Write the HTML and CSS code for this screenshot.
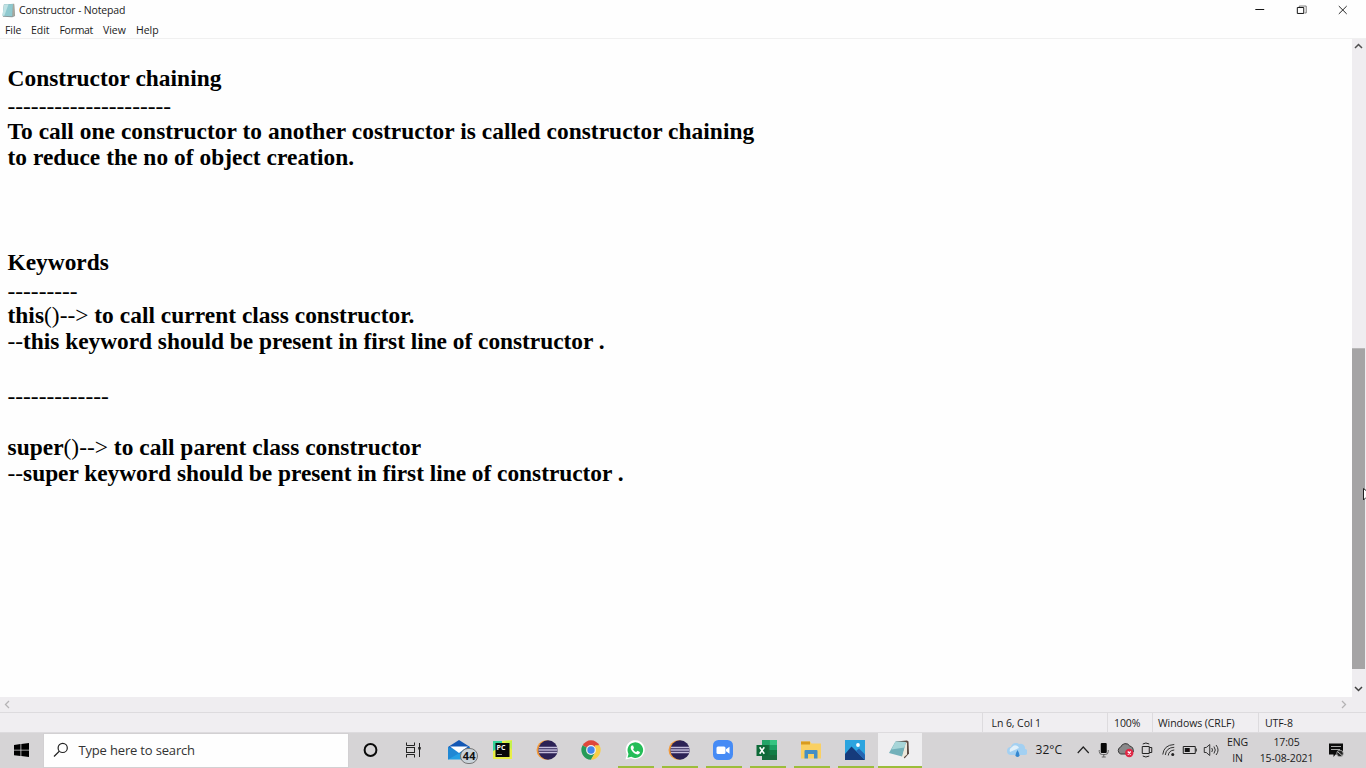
FILE: index.html
```html
<!DOCTYPE html>
<html lang="en">
<head>
<meta charset="utf-8">
<title>Constructor - Notepad</title>
<link rel="stylesheet" href="styles.css">
</head>
<body>
<div class="screen">
  <header class="titlebar">
    <svg class="app-icon" viewBox="0 0 16 16"><path d="M3 1.500 14 .8l1 13-3 1.500-10-.6z" fill="#8a989a"/><path d="M3.300 1.500 12.800 1 12.200 14 1.500 13.500z" fill="#8fc9cf"/><path d="M3.300 1.500 8 1.300 3.500 13.600 1.500 13.500z" fill="#bfe2e4"/><path d="M12.800 1 14 1.200 14.500 13.600 12.200 14.500z" fill="#a9a79c"/></svg>
    <span class="title">Constructor - Notepad</span>
    <div class="controls">
      <svg viewBox="0 0 42 20"><path d="M15.500 9.500h9" stroke="#111" fill="none"/></svg>
      <svg viewBox="0 0 42 20"><path d="M17.500 7.500v-1.500h7v7h-1.500" stroke="#777" fill="none"/><path d="M15.500 7.500h6.500v6h-6.500z" stroke="#111" fill="none"/></svg>
      <svg viewBox="0 0 42 20"><path d="m16 6 8 8m0-8-8 8" stroke="#222" fill="none"/></svg>
    </div>
  </header>
  <nav class="menu"><span class="m1">File</span><span class="m2">Edit</span><span class="m3">Format</span><span class="m4">View</span><span class="m5">Help</span></nav>
  <main class="editor">
    <div class="text">
      <p class="l1">Constructor chaining</p>
      <p class="rule">---------------------</p>
      <p class="l2">To call one constructor to another costructor is called constructor chaining</p>
      <p class="l3">to reduce the no of object creation.</p>
      <p></p><p></p><p></p>
      <p>Keywords</p>
      <p class="rule">---------</p>
      <p class="l3">this<span class="thin">()--&gt;</span> to call current class constructor.</p>
      <p class="l6"><span class="thin">--</span>this keyword should be present in first line of constructor .</p>
      <p></p>
      <p class="rule">-------------</p>
      <p></p>
      <p class="l3">super<span class="thin">()--&gt;</span> to call parent class constructor</p>
      <p class="l6"><span class="thin">--</span>super keyword should be present in first line of constructor .</p>
    </div>
    <aside class="vscroll">
      <svg class="arrow" viewBox="0 0 14 14"><path d="m3 9 3.500-3.500L10 9" stroke="#505050" stroke-width="1.500" fill="none"/></svg>
      <div class="thumb"></div>
      <svg class="arrow" viewBox="0 0 14 14"><path d="m3 4 3.500 3.500L10 4" stroke="#404040" stroke-width="1.500" fill="none"/></svg>
    </aside>
  </main>
  <div class="hscroll">
    <svg viewBox="0 0 14 14"><path d="M9 4 5.500 7.500 9 11" stroke="#b5b3b5" stroke-width="1.300" fill="none"/></svg>
    <svg viewBox="0 0 14 14"><path d="m4 4 3.500 3.500L4 11" stroke="#b5b3b5" stroke-width="1.300" fill="none"/></svg>
  </div>
  <footer class="status">
    <div class="cell pos"><span>Ln 6, Col 1</span></div>
    <div class="cell zoom"><span>100%</span></div>
    <div class="cell eol"><span>Windows (CRLF)</span></div>
    <div class="cell enc"><span>UTF-8</span></div>
  </footer>
  <div class="taskbar">
    <div class="start"><svg width="15" height="14" viewBox="0 0 15 14"><path d="M0 2 6.500 1v5.700H0zM7.300.9 15 0v6.700H7.300zM0 7.400h6.500V13L0 12.200zM7.300 7.400H15V14l-7.700-.9z"/></svg></div>
    <div class="search">
      <svg width="16" height="16" viewBox="0 0 16 16" fill="none" stroke="#222" stroke-width="1.200"><circle cx="9.700" cy="5.900" r="4.600"/><path d="M6.300 9.300 1 14.500"/></svg>
      <span>Type here to search</span>
    </div>
    <div class="apps">
      <div class="app"><svg viewBox="0 0 24 24"><circle cx="11.500" cy="12" r="5.900" fill="none" stroke="#0a0a0a" stroke-width="2"/></svg></div>
      <div class="app"><svg viewBox="0 0 24 24" fill="none" stroke="#222"><path d="M3.500 4.500v3h8v-3M3.500 19.500v-3h8v3M3.500 9v6M11.500 9v6M3 9.500h9M3 14.500h9M16.500 5v14"/><path d="M16.500 9v2.500" stroke-width="2.500"/></svg></div>
      <div class="app mail"><svg viewBox="0 0 24 24"><path d="M1 9 12 2l11 7v11H1z" fill="#1458b5"/><path d="M1 9v12.500h22V9L12 15.500z" fill="#259fe3"/><path d="M1 9v12.500L16 13z" fill="#2088d4"/><path d="M3 8.500h18l-9 6.500z" fill="#fff"/></svg><b class="badge">44</b></div>
      <div class="app"><svg viewBox="0 0 24 24"><path d="M2 3h9l10-1v19H2z" fill="#e8ef46"/><path d="M2 3h9v5L2 13z" fill="#35d49a"/><path d="M14 3h7v9z" fill="#c5f24c"/><path d="M4.500 5h14v14h-14z" fill="#080808"/><text x="5.500" y="11.500" class="pc">PC</text><path d="M6 16.500h5" stroke="#999"/></svg></div>
      <div class="app"><svg viewBox="0 0 24 24"><circle cx="11.200" cy="12" r="9.700" fill="#f29a3b"/><circle cx="13" cy="12" r="9.700" fill="#2c2255"/><path d="M4 9.500h18M3.500 12h19M4 14.500h18" stroke="#c4bddb" stroke-width="1.500"/></svg></div>
      <div class="app"><svg viewBox="0 0 24 24"><path d="M12 12 3.600 7.200A9.700 9.700 0 0 1 20.400 7.200z" fill="#df473b"/><path d="M3.600 7.200A9.700 9.700 0 0 0 12 21.700l4.200-7.300L12 12z" fill="#259b58"/><path d="M20.400 7.200A9.700 9.700 0 0 1 12 21.700l4.200-7.300-.3-7.200z" fill="#f8ce45"/><circle cx="12" cy="12" r="4.900" fill="#f4f2ee"/><circle cx="12" cy="12" r="3.700" fill="#4286ed"/></svg></div>
      <div class="app run"><svg viewBox="0 0 24 24"><path d="m2.500 21.500 1.400-5.200A9.500 9.500 0 1 1 8 20.200z" fill="#fff"/><path d="m4.500 19.700 1-3.800A7.800 7.800 0 1 1 8.300 18.800z" fill="#24bd58"/><path d="M8.700 7.500c-3 2 1.200 8.700 6 8.900 1.600 0 2.500-1.700 2.200-2.300l-2.400-1.300-1.300 1.300c-1.300-.4-2.500-1.600-3.100-2.900l.9-1.200-.9-2.400z" fill="#fff"/></svg></div>
      <div class="app run"><svg viewBox="0 0 24 24"><circle cx="11.200" cy="12" r="9.700" fill="#f29a3b"/><circle cx="13" cy="12" r="9.700" fill="#2c2255"/><path d="M4 9.500h18M3.500 12h19M4 14.500h18" stroke="#c4bddb" stroke-width="1.500"/></svg></div>
      <div class="app run"><svg viewBox="0 0 24 24"><rect x="2" y="2" width="20" height="20" rx="5.500" fill="#468bf5"/><rect x="5.500" y="8.500" width="9" height="7.500" rx="1.500" fill="#fff"/><path d="m15 11.300 3.500-2.500v7L15 13.300z" fill="#fff"/></svg></div>
      <div class="app run"><svg viewBox="0 0 24 24"><path d="M7 2h15v20H7z" fill="#176b3d"/><path d="M7 2h7.500v5H7z" fill="#23a467"/><path d="M14.500 2H22v5h-7.500z" fill="#34c481"/><path d="M14.500 7H22v5h-7.500z" fill="#1ba164"/><path d="M14.500 12H22v5h-7.500z" fill="#117d45"/><path d="M1.500 7h11v11h-11z" fill="#0e6a38"/><path d="m4.700 9.300 4.600 6.400m0-6.400-4.600 6.400" stroke="#fff" stroke-width="1.600"/></svg></div>
      <div class="app run"><svg viewBox="0 0 24 24"><path d="M2 3.500h9l1.500 2H22v15H2z" fill="#fad063"/><path d="M2 3.500h9v3H2z" fill="#d99b1e"/><path d="M5.500 20.500V13q0-1 1-1h11q1 0 1 1v7.500h-3.500V16H9v4.500z" fill="#458fc4"/></svg></div>
      <div class="app run"><svg viewBox="0 0 24 24"><path d="M2 2h20v20H2z" fill="#2ba4df"/><circle cx="15" cy="7" r="1.900" fill="#fff"/><path d="M2 16 8.500 8.500 22 22H2z" fill="#163b7c"/><path d="m13 13 3-2.500 6 6V22z" fill="#2465b2"/></svg></div>
      <div class="app run active"><svg viewBox="0 0 24 24"><path d="M9 3.500 20 2.500l1.500 1 .5 12-4.500 5z" fill="#5b4a42"/><path d="m18.500 4.500 1.500 0 0 12-3.500 3-2-1z" fill="#eee8dc"/><path d="M8.500 3.500 19 4l-4 14.500L2 15z" fill="#72b0ba"/><path d="M8.500 3.500 19 4l-1.500 5.500L4.500 11.500z" fill="#a7d5d8"/></svg></div>
    </div>
    <div class="tray">
      <svg class="weather" viewBox="0 0 20 20"><path d="M4 15a4 4 0 0 1 0-8 5 5 0 0 1 8-3 4.500 4.500 0 0 1 6 5 3 3 0 0 1-1 6z" fill="#a3d0f2"/><path d="M3 12a4 4 0 0 1 2-5 4 4 0 0 1 7 1z" fill="#e1f0fa"/><path d="M10.500 10q4 7 0 7t0-7" fill="#3587cf"/></svg>
      <span class="temp">32°C</span>
      <svg class="ico chev" viewBox="0 0 20 20" fill="none" stroke="#222"><path d="m5 13 5.500-6 5.500 6" stroke-width="1.200"/></svg>
      <svg class="ico mic" viewBox="0 0 20 20"><rect x="7" y="3" width="6" height="10" rx="1" fill="#080808"/><path d="M5.500 10v1.500q0 3 3 3h3q3 0 3-3V10M10 14.500v2.500m-2 0h4" fill="none" stroke="#666"/></svg>
      <svg class="ico cloud" viewBox="0 0 20 20"><path d="M5 14a3.700 3.700 0 0 1 0-7 5 5 0 0 1 9-1q4 1 3.500 6L13 14z" fill="#8a898a" stroke="#383838"/><circle cx="13.500" cy="13" r="4.200" fill="#df2745"/><path d="m12 11.500 3 3m0-3-3 3" stroke="#fff" stroke-width="1.300"/></svg>
      <svg class="ico meet" viewBox="0 0 20 20" fill="none" stroke="#222"><path d="M5.500 6.500h7v7h-7zM12.500 7.500h2.500v5h-2.500M6 4q3-2 6.500 0M6 16q3 2 6.500 0"/></svg>
      <svg class="ico wifi" viewBox="0 0 20 20" fill="none" stroke="#333"><path d="M4 14.500Q5 5 15.500 4.500M6.500 15Q7.500 7.500 15.500 7.300M9.500 15.500Q10 10.500 15.500 10"/><circle cx="14" cy="14.500" r="1.500" fill="#222" stroke="none"/></svg>
      <svg class="ico bat" viewBox="0 0 20 20" fill="none" stroke="#222"><path d="M3.500 6.500h12v7h-12zM16.500 8.500v3"/><path d="M5 8h5v4H5z" fill="#111" stroke="none"/></svg>
      <svg class="ico vol" viewBox="0 0 20 20" fill="none" stroke="#333"><path d="M2.500 7.500h2l3.500-3v11l-3.500-3h-2zM10 8q1.500 2 0 4M12.200 6.500q2.700 3.500 0 7M14.300 5q4 5 0 10"/></svg>
      <div class="lang"><span>ENG</span><span class="in">IN</span></div>
      <div class="clock"><span>17:05</span><span class="date">15-08-2021</span></div>
      <svg class="note" viewBox="0 0 20 20"><path d="M3 3.500h14v11H9.500l-2 2.500v-2.500H3z" fill="#0c0c0c"/><path d="M5 6.500h10M5 9.500h9" stroke="#aaa"/><circle cx="14" cy="13.500" r="3.300" fill="#222" stroke="#bbb" stroke-width=".8"/><path d="m12 12 4 3.500" stroke="#bbb"/></svg>
    </div>
  </div>
  <svg class="cursor" viewBox="0 0 4 14"><path d="M4 2.500 1.500.5V12L4 9.500" fill="#fff" stroke="#222"/></svg>
</div>
</body>
</html>
```
FILE: styles.css
```css
* { box-sizing: border-box; }
body { margin: 0; overflow: hidden; background: #fefefe; color: #1b1b1b; font-family: "Open Sans", sans-serif; font-size: 11px; }
svg { display: block; flex: none; }
span { white-space: nowrap; }
.screen { width: 1366px; height: 768px; display: flex; flex-direction: column; position: relative; overflow: hidden; }
.titlebar { height: 20px; display: flex; align-items: center; padding-left: 1px; flex: none; }
.app-icon { width: 15px; height: 15px; margin-right: 3px; }
.title { font-size: 10.500px; line-height: 20px; letter-spacing: -.16px; }
.controls { margin-left: auto; display: flex; padding-right: 1.500px; }
.controls svg { width: 41.500px; height: 20px; }
.menu { height: 18px; display: flex; padding-left: 5px; font-size: 10.500px; line-height: 20px; letter-spacing: -.05px; flex: none; }
.m1 { width: 26px; }
.m2 { width: 28.500px; }
.m3 { width: 43.500px; letter-spacing: -.3px; }
.m4 { width: 33px; }
.editor { height: 659px; display: flex; border-top: 1px solid #f0f0f0; flex: none; }
.text { flex: 1; padding: 26px 0 0 7.500px; color: #000; font: bold 23.400px/26.330px "Liberation Serif", serif; }
.text p { margin: 0; height: 26.330px; white-space: nowrap; }
.text .rule { padding-top: 2px; font-weight: normal; }
.thin { font-weight: normal; letter-spacing: 0; }
.l1 { letter-spacing: .03px; }
.l2 { letter-spacing: .046px; }
.l3 { letter-spacing: .036px; }
.l6 { letter-spacing: -.03px; }
.vscroll { width: 14px; background: #efedf0; display: flex; flex-direction: column; }
.arrow { width: 14px; height: 14px; flex: none; }
.vscroll .thumb { width: 13px; height: 321px; margin-top: 295px; margin-bottom: 14px; background: #a5a4a5; border-top: 1px solid #b9b8b9; flex: none; }
.hscroll { height: 15px; background: #efedf0; display: flex; justify-content: space-between; padding-right: 14px; flex: none; }
.hscroll svg { width: 14px; height: 14px; }
.status { height: 20px; background: #f0eef1; border-top: 1px solid #dddbde; display: flex; justify-content: flex-end; font-size: 10.500px; line-height: 20px; letter-spacing: -.08px; flex: none; }
.cell { border-left: 1px solid #dddbde; }
.pos { width: 125px; padding-left: 8.500px; }
.zoom { width: 45px; padding-left: 6px; }
.eol { width: 106px; padding-left: 5px; }
.enc { width: 108px; padding-left: 6px; }
.taskbar { height: 36px; background: #d6d4d6; display: flex; flex: none; border-top: 1px solid #dddbde; }
.start { width: 43px; display: flex; align-items: center; justify-content: center; padding-bottom: 2px; }
.search { width: 306px; height: 35px; background: #fefefe; border: 1px solid #d2d0d2; display: flex; align-items: center; padding: 0 0 2px 9px; gap: 9.500px; font-size: 13px; letter-spacing: -.17px; color: #333; }
.apps { display: flex; }
.app { width: 44.080px; height: 35px; display: flex; align-items: center; justify-content: center; position: relative; padding: 0 1px 2px 0; }
.app svg { width: 24px; height: 24px; }
.run { background: linear-gradient(#9cbd3b, #9cbd3b) center bottom / 36px 2px no-repeat; }
.active { background: linear-gradient(#9cbd3b, #9cbd3b) center bottom / 44px 2px no-repeat, #efeef0; }
.badge { position: absolute; left: 23px; top: 15px; width: 18px; height: 16px; border: 1px solid #777; border-radius: 8px; background: #c9d2d9; text-align: center; font: bold 11px/14px "Open Sans", sans-serif; color: #111; }
.pc { font: bold 7px "Open Sans", sans-serif; fill: #fff; }
.tray { flex: 1; display: flex; align-items: center; padding: 0 0 2px 84.500px; }
.weather { width: 20px; height: 20px; margin-right: 9px; }
.temp { width: 36px; font-size: 12px; }
.ico { width: 21.500px; height: 20px; }
.lang { width: 28px; margin-left: 1.500px; display: flex; flex-direction: column; align-items: center; line-height: 16px; font-size: 10.500px; letter-spacing: -.15px; }
.clock { width: 60px; margin-left: 5px; display: flex; flex-direction: column; align-items: center; line-height: 16px; font-size: 10.500px; letter-spacing: -.12px; }
.note { width: 20px; height: 20px; margin-left: 9px; }
.cursor { position: absolute; left: 1362px; top: 488px; width: 4px; height: 14px; }
```
